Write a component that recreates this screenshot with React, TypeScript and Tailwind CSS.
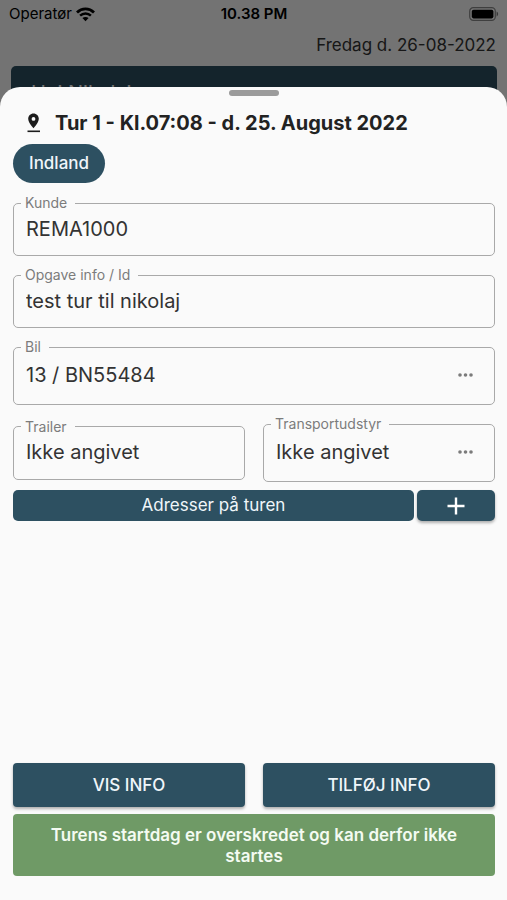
import type { ReactNode } from "react";

type FieldProps = {
  id: string;
  label: string;
  value: string;
  menu?: boolean;
};

function Dots() {
  return (
    <svg width="16" height="4" viewBox="0 0 16 4" fill="#7b7b7b" aria-hidden="true">
      <circle cx="2" cy="2" r="1.8" />
      <circle cx="7.5" cy="2" r="1.8" />
      <circle cx="13" cy="2" r="1.8" />
    </svg>
  );
}

function Field({ id, label, value, menu = false }: FieldProps) {
  return (
    <fieldset className="w-full min-w-0 rounded-[5px] border border-[#a9a9a9] pb-[9px]">
      <legend className="ml-[7px] h-4 pr-2 pl-1 text-sm leading-4 text-[#7c7c7c]">
        <label htmlFor={id}>{label}</label>
      </legend>
      <div className={menu ? "flex h-10 items-center pr-5 pl-3" : "flex h-[35px] items-center pr-3 pl-3"}>
        <input
          id={id}
          readOnly
          defaultValue={value}
          className="w-full min-w-0 flex-1 bg-transparent text-xl leading-6 text-[#333333] outline-none"
        />
        {menu && (
          <button type="button" aria-label={`Vælg ${label}`} className="flex h-8 items-center">
            <Dots />
          </button>
        )}
      </div>
    </fieldset>
  );
}

function ActionButton({ children }: { children: ReactNode }) {
  return (
    <button
      type="button"
      className="h-11 rounded bg-[#2d5061] pt-0.5 text-[17px] font-medium text-[#f0f6fa] shadow-[0_2px_3px_rgba(0,0,0,0.3)]"
    >
      {children}
    </button>
  );
}

function StatusBar() {
  return (
    <div className="grid h-7 grid-cols-3 items-center pr-2 pl-[9px] text-black">
      <div className="flex items-center gap-1 text-[15px]">
        <span>Operatør</span>
        <svg width="19" height="15" viewBox="0 0 19 15" aria-label="Wi-Fi">
          <path d="M1 5.4C5.8 .7 13.2 .7 18 5.4" fill="none" stroke="#000" strokeWidth="2.8" />
          <path d="M4.1 8.7c3.1-2.9 7.7-2.9 10.8 0" fill="none" stroke="#000" strokeWidth="2.5" />
          <path d="M6.4 11.1c1.8-1.6 4.4-1.6 6.2 0L9.500 14.200z" />
        </svg>
      </div>
      <div className="text-center text-[15px] font-semibold">10.38 PM</div>
      <svg className="justify-self-end" width="30" height="14" viewBox="0 0 30 14" aria-label="Batteri">
        <rect x=".7" y=".7" width="25.6" height="12.6" rx="3.6" fill="none" stroke="#000" strokeOpacity=".45" strokeWidth="1.2" />
        <rect x="2.8" y="2.8" width="21.6" height="8.6" rx="1.8" />
        <path d="M27.6 4.600c2 .8 2 4 0 4.800z" fillOpacity=".5" />
      </svg>
    </div>
  );
}

export default function App() {
  return (
    <div className="grid min-h-screen font-['Inter','Liberation_Sans',sans-serif]">
      <div className="relative bg-[#fafafa] [grid-area:1/1]">
        <StatusBar />
        <p className="h-[38px] pr-[11px] text-right text-[17px] leading-[34px] text-[#333333]">Fredag d. 26-08-2022</p>
        <div className="mr-2.5 ml-[11px] h-16 rounded-[5px] bg-[#2d5061] px-5 pt-[15px] text-xl leading-6 text-white">
          Hej Nikolaj
        </div>
        <div className="absolute inset-0 bg-black/54" />
      </div>

      <main className="relative mt-[87px] flex flex-col rounded-t-[20px] bg-[#fafafa] pt-[3px] pr-3 pb-6 pl-[13px] [grid-area:1/1]">
        <div className="h-1.5 w-[50px] self-center rounded-full bg-[#9b9b9b]" />
        <h1 className="mt-3 flex h-[30px] items-center gap-[14px] pl-[13px] text-xl font-bold text-[#222222]">
          <svg width="15" height="20" viewBox="0 0 15 20" fill="#1c1c1c" aria-hidden="true">
            <path
              fillRule="evenodd"
              d="M7.5 .5C4.5 .5 2.200 2.800 2.200 5.800c0 4 5.300 9.500 5.300 9.500s5.300-5.500 5.300-9.500C12.800 2.800 10.500 .5 7.500 .5zm0 3.500a1.900 1.900 0 1 1 0 3.800 1.900 1.900 0 0 1 0-3.800z"
            />
            <path d="M1.500 17.500h12.500v1.600H1.500z" />
          </svg>
          Tur 1 - Kl.07:08 - d. 25. August 2022
        </h1>
        <span className="mt-1.5 flex h-[39px] items-center self-start rounded-full bg-[#2d5061] px-4 pt-px text-[17px] font-medium text-[#f0f6fa]">
          Indland
        </span>

        <div className="mt-3 flex flex-col gap-[11px]">
          <Field id="kunde" label="Kunde" value="REMA1000" />
          <Field id="opgave" label="Opgave info / Id" value="test tur til nikolaj" />
          <Field id="bil" label="Bil" value="13 / BN55484" menu />
          <div className="grid grid-cols-2 items-center gap-[18px]">
            <Field id="trailer" label="Trailer" value="Ikke angivet" />
            <Field id="transportudstyr" label="Transportudstyr" value="Ikke angivet" menu />
          </div>
        </div>

        <div className="mt-2 flex gap-[3px]">
          <h2 className="flex h-[31px] flex-1 items-center justify-center rounded-[5px] bg-[#2d5061] text-[17px] text-[#f0f6fa]">
            Adresser på turen
          </h2>
          <button
            type="button"
            aria-label="Tilføj adresse"
            className="flex h-[31px] w-[78px] items-center justify-center rounded-[5px] bg-[#2d5061] shadow-[0_2px_3px_rgba(0,0,0,0.3)]"
          >
            <svg width="18" height="18" viewBox="0 0 18 18" stroke="#fff" strokeWidth="2.4" aria-hidden="true">
              <path d="M9 .5v17M.5 9h17" />
            </svg>
          </button>
        </div>

        <div className="mt-auto grid grid-cols-2 gap-[18px] pt-6">
          <ActionButton>VIS INFO</ActionButton>
          <ActionButton>TILFØJ INFO</ActionButton>
        </div>
        <button
          type="button"
          className="mt-[7px] h-[62px] rounded bg-[#6f9a66] px-6 pt-px text-[17px] leading-[21px] font-semibold text-[#f4fbf2]"
        >
          Turens startdag er overskredet og kan derfor ikke startes
        </button>
      </main>
    </div>
  );
}
